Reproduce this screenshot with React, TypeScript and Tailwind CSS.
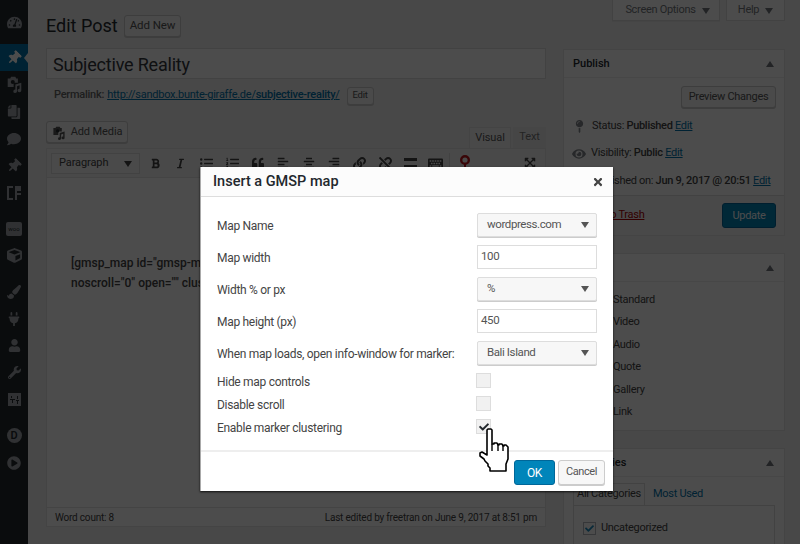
import {
  FaBold,
  FaCheck,
  FaComment,
  FaCopy,
  FaCube,
  FaExpandArrowsAlt,
  FaEye,
  FaItalic,
  FaLink,
  FaListOl,
  FaListUl,
  FaPaintBrush,
  FaPlug,
  FaPlayCircle,
  FaQuoteLeft,
  FaAlignCenter,
  FaAlignLeft,
  FaAlignRight,
  FaTachometerAlt,
  FaThumbtack,
  FaUnlink,
  FaUser,
  FaWrench,
  FaTimes,
  FaKeyboard,
  FaMapPin,
} from "react-icons/fa";
import type { ReactNode } from "react";

const font = "font-['Roboto','Noto_Sans',sans-serif]";

function Caret({ className = "" }: { className?: string }) {
  return (
    <svg width="8" height="6" viewBox="0 0 8 6" className={className}>
      <path d="M0 0h8L4 6z" fill="currentColor" />
    </svg>
  );
}

function MediaIcon({ size = 18 }: { size?: number }) {
  return (
    <svg width={size} height={size} viewBox="0 0 20 20" fill="currentColor">
      <path d="M2 3h3l1-2h5l1 2h2v5H9v5H2z" />
      <circle cx="8" cy="7" r="2.4" fill="#23282d" />
      <path d="M11 10l7-2v9a2.2 2 0 1 1-2-2v-4l-3 1v6a2.2 2 0 1 1-2-2z" />
    </svg>
  );
}

function MapMarker() {
  return (
    <svg width="12" height="18" viewBox="0 0 12 18" className="mt-[1px]">
      <circle cx="6" cy="5" r="3.8" fill="none" stroke="#c0171b" strokeWidth="2.4" />
      <path d="M6 9v8" stroke="#c0171b" strokeWidth="2" />
    </svg>
  );
}

function Sidebar() {
  return (
    <aside className="flex w-[28px] shrink-0 flex-col items-center bg-[#23282d] text-[#a0a5aa]">
      <div className="flex h-[44px] items-center pt-[1px]">
        <FaTachometerAlt size={15} />
      </div>
      <div className="relative flex h-[27px] w-full items-center justify-center bg-[#0073aa] text-white">
        <FaThumbtack size={14} className="rotate-45" />
        <div className="absolute right-0 top-[9px] h-0 w-0 border-y-[5px] border-r-[4px] border-y-transparent border-r-[#f1f1f1]" />
      </div>
      <div className="flex h-[27px] items-center">
        <MediaIcon size={17} />
      </div>
      <div className="flex h-[27px] items-center">
        <FaCopy size={14} className="-scale-x-100" />
      </div>
      <div className="flex h-[27px] items-center">
        <FaComment size={14} />
      </div>
      <div className="flex h-[27px] items-center">
        <FaThumbtack size={14} className="rotate-45" />
      </div>
      <div className="flex h-[27px] items-center">
        <svg width="14" height="14" viewBox="0 0 14 14" fill="currentColor">
          <path d="M0 0h6v2H2v10h4v2H0zM8 0h6v5H10v2h4v2h-4v5H8z" />
        </svg>
      </div>
      <div className="mt-[9px] flex h-[27px] items-center">
        <div className="flex h-[14px] w-[16px] items-center justify-center rounded-[2px] bg-[#a0a5aa] text-[6px] leading-none text-[#23282d]">
          woo
        </div>
      </div>
      <div className="flex h-[27px] items-center">
        <FaCube size={15} />
      </div>
      <div className="mt-[9px] flex h-[27px] items-center">
        <FaPaintBrush size={14} />
      </div>
      <div className="flex h-[27px] items-center">
        <FaPlug size={14} />
      </div>
      <div className="flex h-[27px] items-center">
        <FaUser size={13} />
      </div>
      <div className="flex h-[27px] items-center">
        <FaWrench size={13} />
      </div>
      <div className="flex h-[27px] items-center">
        <svg width="13" height="13" viewBox="0 0 13 13" fill="currentColor">
          <path d="M0 0h13v13H0zM2 6v1h2v3h1V7h2V6zm6 1v1h1v3h1V8h1V7zM3 3v2h1V3zm6 0v3h1V3z" fillRule="evenodd" />
        </svg>
      </div>
      <div className="mt-[9px] flex h-[27px] items-center">
        <div className="flex h-[15px] w-[15px] items-center justify-center rounded-full bg-[#a0a5aa] text-[11px] font-semibold leading-none text-[#23282d]">
          D
        </div>
      </div>
      <div className="flex h-[27px] items-center">
        <FaPlayCircle size={14} />
      </div>
    </aside>
  );
}

function WpButton({ children, className = "" }: { children: ReactNode; className?: string }) {
  return (
    <div
      className={`flex items-center justify-center rounded-[3px] border border-[#ccc] bg-[#f7f7f7] text-[#555] shadow-[0_1px_0_#ccc] ${className}`}
    >
      {children}
    </div>
  );
}

function Editor() {
  const tools: [ReactNode, string][] = [
    [<FaBold size={11} />, "w-[26px]"],
    [<FaItalic size={11} />, "w-[25px]"],
    [<FaListUl size={13} />, "w-[26px]"],
    [<FaListOl size={13} />, "w-[26px]"],
    [<FaQuoteLeft size={12} />, "w-[25px]"],
    [<FaAlignLeft size={12} />, "w-[26px]"],
    [<FaAlignCenter size={12} />, "w-[25px]"],
    [<FaAlignRight size={12} />, "w-[25px]"],
    [<FaLink size={13} />, "w-[26px]"],
    [<FaUnlink size={13} />, "w-[26px]"],
    [<div className="h-[10px] w-[13px] border-y-[3px] border-[#444]" />, "w-[25px]"],
    [<FaKeyboard size={15} />, "w-[25px]"],
  ];

  return (
    <div className="w-[500px]">
      <div className="flex h-[21px] items-center gap-[7px]">
        <div className="w-[71px] whitespace-nowrap pt-[1px] text-[18px] leading-none text-[#23282d]">Edit Post</div>
        <WpButton className="h-[22px] w-[57px] text-[11.5px] tracking-[-0.1px] text-[#0073aa]">Add New</WpButton>
      </div>
      <div className="mt-[12px] flex h-[31px] items-center border border-[#ddd] bg-white pl-[6px] pt-[2px] text-[18px] tracking-[-0.2px] text-[#32373c]">
        Subjective Reality
      </div>
      <div className="mt-[7px] flex h-[18px] items-center gap-[3px] pl-[8px] pt-[1px] text-[11px] tracking-[-0.25px] text-[#666]">
        <span className="font-medium">Permalink:</span>
        <span className="text-[#0073aa] underline">
          http://sandbox.bunte-giraffe.de/<span className="font-medium">subjective-reality</span>/
        </span>
        <WpButton className="ml-[4px] h-[18px] w-[27px] text-[9.5px]">Edit</WpButton>
      </div>
      <div className="mt-[17px] flex h-[27px] items-start justify-between">
        <WpButton className="h-[22px] w-[82px] gap-[5px] pt-[1px] text-[11px] tracking-[-0.1px]">
          <MediaIcon size={14} />
          Add Media
        </WpButton>
        <div className="mt-[6px] flex h-[21px] text-[11px] tracking-[-0.1px] text-[#555]">
          <div className="flex w-[42px] items-center justify-center border border-b-0 border-[#e5e5e5] bg-[#f5f5f5]">
            Visual
          </div>
          <div className="ml-[2px] flex w-[33px] items-center justify-center bg-[#ebebeb] text-[#777]">Text</div>
        </div>
      </div>
      <div className="flex h-[30px] items-center border border-[#e5e5e5] bg-[#f5f5f5] pl-[4px] text-[#444]">
        <div className="flex h-[21px] w-[89px] items-center justify-between border border-[#ddd] bg-[#f7f7f7] px-[7px] pt-[1px] text-[11px] tracking-[-0.1px]">
          Paragraph
          <Caret />
        </div>
        <div className="ml-[2px] flex items-center">
          {tools.map(([icon, width], i) => (
            <div key={i} className={`flex items-center justify-center ${width}`}>
              {icon}
            </div>
          ))}
        </div>
        <div className="ml-[1px] h-[20px] w-px bg-[#ddd]" />
        <div className="ml-[9px] flex">
          <MapMarker />
        </div>
        <div className="ml-auto mr-[9px] flex text-[#444]">
          <FaExpandArrowsAlt size={12} />
        </div>
      </div>
      <div className="flex h-[329px] flex-col border-x border-[#e5e5e5] bg-white px-[24px] pt-[75px] text-[12px] font-medium leading-[20px] text-[#444]">
        <div className="whitespace-nowrap">[gmsp_map id="gmsp-map-1" width="100"</div>
        <div className="whitespace-nowrap">noscroll="0" open="" clustering="1"]</div>
      </div>
      <div className="flex h-[20px] items-center justify-between border border-[#e5e5e5] bg-white px-[8px] text-[10px] tracking-[-0.2px] text-[#444]">
        <span>Word count: 8</span>
        <span>Last edited by freetran on June 9, 2017 at 8:51 pm</span>
      </div>
    </div>
  );
}

function Panel({ title, children, className = "" }: { title: string; children: ReactNode; className?: string }) {
  return (
    <div className={`border border-[#e5e5e5] bg-white ${className}`}>
      <div className="flex h-[28px] items-center justify-between border-b border-[#eee] px-[9px] pt-[1px] text-[11px] font-medium tracking-normal text-[#23282d]">
        {title}
        <Caret className="mr-[1px] rotate-180 text-[#72777c]" />
      </div>
      {children}
    </div>
  );
}

function RightColumn() {
  return (
    <div className="ml-[17px] w-[222px] text-[11px] tracking-[-0.3px] text-[#444]">
      <div className="flex h-[49px] items-start justify-end gap-[6px]">
        <div className="flex h-[21px] w-[108px] items-center justify-center gap-[6px] border border-t-0 border-[#ddd] bg-white pl-[3px] pt-[1px] text-[#72777c] shadow-[0_1px_1px_rgba(0,0,0,0.04)]">
          Screen Options
          <Caret />
        </div>
        <div className="flex h-[21px] w-[59px] items-center justify-center gap-[6px] border border-t-0 border-[#ddd] bg-white pt-[1px] text-[#72777c]">
          Help
          <Caret />
        </div>
      </div>
      <Panel title="Publish" className="h-[187px]">
        <div className="flex justify-end pr-[8px] pt-[8px]">
          <WpButton className="h-[22px] w-[95px]">Preview Changes</WpButton>
        </div>
        <div className="mt-[5px] flex h-[27px] items-center pl-[9px]">
          <FaMapPin size={13} className="w-[13px] text-[#82878c]" />
          <span className="ml-[6px]">
            Status: <b className="font-medium">Published</b> <span className="text-[#0073aa] underline">Edit</span>
          </span>
        </div>
        <div className="flex h-[27px] items-center pl-[8px]">
          <FaEye size={14} className="text-[#82878c]" />
          <span className="ml-[5px]">
            Visibility: <b className="font-medium">Public</b> <span className="text-[#0073aa] underline">Edit</span>
          </span>
        </div>
        <div className="flex h-[28px] items-center pl-[27px] pt-[1px]">
          <span className="whitespace-nowrap">
            Published on: <b className="font-medium">Jun 9, 2017 @ 20:51</b>{" "}
            <span className="text-[#0073aa] underline">Edit</span>
          </span>
        </div>
        <div className="flex h-[40px] items-center justify-between border-t border-[#ddd] bg-[#f5f5f5] pl-[9px] pr-[8px]">
          <span className="pl-[6px] text-[#a00] underline">Move to Trash</span>
          <div className="flex h-[25px] w-[54px] items-center justify-center rounded-[3px] border border-[#006799] bg-[#0085ba] pt-[1px] text-white">
            Update
          </div>
        </div>
      </Panel>
      <Panel title="Format" className="mt-[17px] h-[178px]">
        <div className="flex flex-col pl-[32px] pt-[7px]">
          {["Standard", "Video", "Audio", "Quote", "Gallery", "Link"].map((format) => (
            <div key={format} className="flex h-[22.4px] items-center pl-[17px]">
              {format}
            </div>
          ))}
        </div>
      </Panel>
      <Panel title="Categories" className="mt-[17px] h-[120px]">
        <div className="px-[9px] pt-[6px]">
          <div className="flex h-[22px]">
            <div className="flex w-[72px] items-center justify-center whitespace-nowrap border border-b-0 border-[#ddd] bg-white">
              All Categories
            </div>
            <div className="flex items-center whitespace-nowrap px-[8px] text-[#0073aa]">Most Used</div>
          </div>
          <div className="h-[60px] border border-[#ddd] px-[9px] pt-[14px]">
            <div className="flex items-center gap-[5px]">
              <div className="flex h-[13px] w-[13px] items-center justify-center border border-[#b4b9be] bg-white text-[#1e8cbe]">
                <FaCheck size={9} />
              </div>
              Uncategorized
            </div>
            <div className="mt-[8px] h-[13px] w-[13px] border border-[#b4b9be] bg-white" />
          </div>
        </div>
      </Panel>
    </div>
  );
}

function SelectField({ value }: { value: string }) {
  return (
    <div className="flex h-[24px] w-[120px] items-center justify-between rounded-[2px] border border-[#ddd] bg-[#f7f7f7] pl-[9px] pr-[7px] text-[11.5px] tracking-[-0.4px] text-[#555] shadow-[0_1px_0_#ccc]">
      {value}
      <Caret className="text-[#555]" />
    </div>
  );
}

function TextField({ value }: { value: string }) {
  return (
    <div className="flex h-[24px] w-[120px] items-center border border-[#ddd] bg-white pl-[3px] text-[11.5px] tracking-[-0.4px] text-[#555]">
      {value}
    </div>
  );
}

function Row({ label, children }: { label: string; children: ReactNode }) {
  return (
    <div className="flex h-[32px] items-start justify-between">
      <span className="flex h-[24px] items-center whitespace-nowrap pt-[2px]">{label}</span>
      {children}
    </div>
  );
}

function CheckRow({ label, checked }: { label: string; checked?: boolean }) {
  return (
    <div className="flex h-[23px] items-start">
      <span className="flex h-[15px] items-center pt-[3px]">{label}</span>
      <div className="ml-auto mr-[106px] flex h-[15px] w-[15px] items-center justify-center border border-[#ddd] bg-[#f1f1f1] text-[#23282d]">
        {checked && <FaCheck size={10} />}
      </div>
    </div>
  );
}

function HandCursor() {
  return (
    <svg width="34" height="46" viewBox="0 0 34 46" className="absolute left-[277px] top-[259px]">
      <path
        d="M10 3h3l1 1v14h2v-1h3l1 2h1v-1h3l1 2h1v-1h2l2 2v12l-2 5v7H12v-3l-2-2v-2l-3-3-1-2-4-3v-3l2-1 5 3V4z"
        fill="#fff"
        stroke="#000"
        strokeWidth="1.6"
        strokeLinejoin="round"
      />
      <path d="M14 18v7M20 19v6M25 20v5" stroke="#000" strokeWidth="1.4" />
    </svg>
  );
}

function MapDialog() {
  return (
    <div className="absolute left-[200px] top-[167px] flex h-[324px] w-[413px] flex-col border-l border-[#aaa] bg-white text-[12px] tracking-[-0.3px] text-[#444] shadow-[0_1px_2px_rgba(0,0,0,0.8)]">
      <div className="flex h-[30px] shrink-0 items-center justify-between border-b border-[#ddd] bg-[#fcfcfc] pl-[12px] pr-[9px] text-[14.5px] font-medium tracking-normal text-[#23282d]">
        Insert a GMSP map
        <FaTimes size={12} className="text-[#444]" />
      </div>
      <div className="flex-1 px-[16px] pt-[16px]">
        <Row label="Map Name">
          <SelectField value="wordpress.com" />
        </Row>
        <Row label="Map width">
          <TextField value="100" />
        </Row>
        <Row label="Width % or px">
          <SelectField value="%" />
        </Row>
        <Row label="Map height (px)">
          <TextField value="450" />
        </Row>
        <Row label="When map loads, open info-window for marker:">
          <SelectField value="Bali Island" />
        </Row>
        <CheckRow label="Hide map controls" />
        <CheckRow label="Disable scroll" />
        <CheckRow label="Enable marker clustering" checked />
      </div>
      <div className="flex h-[41px] shrink-0 items-start justify-end gap-[3px] border-t-2 border-[#eee] pr-[8px] pt-[8px]">
        <div className="flex h-[25px] w-[41px] items-center justify-center rounded-[3px] border border-[#006799] bg-[#0085ba] text-white">
          OK
        </div>
        <WpButton className="h-[25px] w-[47px] text-[11px] tracking-[-0.4px]">Cancel</WpButton>
      </div>
      <HandCursor />
    </div>
  );
}

export default function App() {
  return (
    <div className={`relative flex h-[544px] w-[800px] overflow-hidden bg-[#f1f1f1] ${font}`}>
      <Sidebar />
      <main className="flex pl-[18px] pt-[15px]">
        <Editor />
        <div className="-mt-[15px]">
          <RightColumn />
        </div>
      </main>
      <div className="absolute inset-0 bg-black/70" />
      <MapDialog />
    </div>
  );
}
